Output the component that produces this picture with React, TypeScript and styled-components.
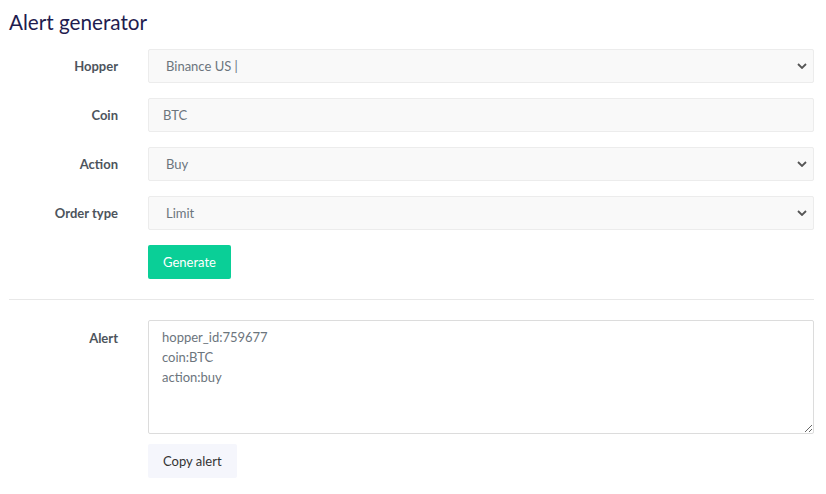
import React from "react";
import styled, { createGlobalStyle } from "styled-components";

const Global = createGlobalStyle`
  html, body { margin: 0; padding: 0; background: #fff; }
  body { font-family: "Lato", "Noto Sans", sans-serif; }
`;

const Page = styled.div`
  padding: 9px 12px 0 9px;
  width: 805px;
`;

const Title = styled.h1`
  margin: 0 0 14px 0;
  font-family: "Lato", sans-serif;
  font-weight: 400;
  font-size: 20.7px;
  line-height: 26px;
  color: #1f1c4f;
`;

const Row = styled.div<{ $top?: boolean }>`
  display: flex;
  align-items: ${(p) => (p.$top ? "flex-start" : "center")};
  margin-bottom: 15px;
`;

const Label = styled.label<{ $top?: boolean }>`
  width: 109px;
  padding-right: 30px;
  text-align: right;
  font-size: 13px;
  font-weight: 700;
  color: #4d545c;
  flex-shrink: 0;
  padding-top: ${(p) => (p.$top ? "10px" : "0")};
`;

const Field = styled.div`
  flex: 1;
  display: flex;
  flex-direction: column;
  align-items: flex-start;
`;

const Input = styled.input`
  box-sizing: border-box;
  width: 100%;
  height: 34px;
  padding: 0 14px;
  border: 1px solid #ececec;
  border-radius: 2px;
  background: #f9f9f9;
  font-family: inherit;
  font-size: 13px;
  color: #6c757d;
  outline: none;
`;

const Select = styled.select`
  box-sizing: border-box;
  width: 100%;
  height: 34px;
  padding: 0 30px 0 17px;
  border: 1px solid #ececec;
  border-radius: 2px;
  background-color: #f9f9f9;
  background-image: url("data:image/svg+xml;utf8,<svg xmlns='http://www.w3.org/2000/svg' width='10' height='6' viewBox='0 0 10 6'><path d='M1 1l4 4 4-4' fill='none' stroke='%23555' stroke-width='1.8'/></svg>");
  background-repeat: no-repeat;
  background-position: right 6px center;
  appearance: none;
  font-family: inherit;
  font-size: 13px;
  color: #6c757d;
  outline: none;
`;

const TextArea = styled.textarea`
  box-sizing: border-box;
  width: 100%;
  height: 114px;
  padding: 6px 13px;
  border: 1px solid #dcdcdc;
  border-radius: 2px;
  background: #fff;
  font-family: inherit;
  font-size: 13px;
  line-height: 20px;
  color: #6c757d;
  outline: none;
  resize: vertical;
`;

const Button = styled.button<{ $variant: "primary" | "light" }>`
  height: 34px;
  margin-top: ${(p) => (p.$variant === "light" ? "10px" : "0")};
  padding: 0 15px;
  border: none;
  border-radius: 2px;
  background: ${(p) => (p.$variant === "primary" ? "#0acf97" : "#f5f6fc")};
  color: ${(p) => (p.$variant === "primary" ? "#fff" : "#333")};
  font-family: inherit;
  font-size: 13px;
  cursor: pointer;
`;

const Divider = styled.hr`
  border: none;
  border-top: 1px solid #e8e8e8;
  margin: 20px 0 20px 0;
`;

export default function App() {
  return (
    <>
      <Global />
      <Page>
        <Title>Alert generator</Title>
        <Row>
          <Label>Hopper</Label>
          <Field>
            <Select defaultValue="b">
              <option value="b">Binance US |</option>
            </Select>
          </Field>
        </Row>
        <Row>
          <Label>Coin</Label>
          <Field>
            <Input defaultValue="BTC" />
          </Field>
        </Row>
        <Row>
          <Label>Action</Label>
          <Field>
            <Select defaultValue="buy">
              <option value="buy">Buy</option>
              <option value="sell">Sell</option>
            </Select>
          </Field>
        </Row>
        <Row>
          <Label>Order type</Label>
          <Field>
            <Select defaultValue="limit">
              <option value="limit">Limit</option>
              <option value="market">Market</option>
            </Select>
          </Field>
        </Row>
        <Row>
          <Label />
          <Field>
            <Button $variant="primary">Generate</Button>
          </Field>
        </Row>
        <Divider />
        <Row $top>
          <Label $top>Alert</Label>
          <Field>
            <TextArea
              readOnly
              value={"hopper_id:759677\ncoin:BTC\naction:buy"}
            />
            <Button $variant="light">Copy alert</Button>
          </Field>
        </Row>
      </Page>
    </>
  );
}
